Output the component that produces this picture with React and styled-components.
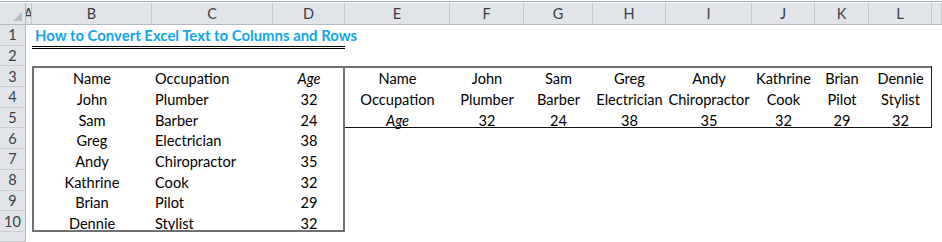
import styled, { createGlobalStyle } from "styled-components";

const GlobalStyle = createGlobalStyle`
  html, body {
    margin: 0;
    padding: 0;
    background: #ffffff;
  }
  body {
    font-family: "Lato", "Open Sans", sans-serif;
    color: #000;
  }
`;

const letters = ["A", "B", "C", "D", "E", "F", "G", "H", "I", "J", "K", "L", ""];

const people = [
  ["John", "Plumber", 32],
  ["Sam", "Barber", 24],
  ["Greg", "Electrician", 38],
  ["Andy", "Chiropractor", 35],
  ["Kathrine", "Cook", 32],
  ["Brian", "Pilot", 29],
  ["Dennie", "Stylist", 32],
];

const Sheet = styled.div`
  margin-top: 1px;
  padding-top: 1px;
  border-top: 1px solid #a3a6aa;
  width: 942px;
  height: 239px;
  display: grid;
  grid-template-columns: 26px 6px 120px 121px 72px 105px 74px 69px 73px 86px 63px 54px 63px 1fr;
  grid-template-rows: 22px repeat(10, 20.7px) 1fr;
  overflow: hidden;
  font-size: 14.6px;
`;

const Corner = styled.div`
  grid-column: 1;
  grid-row: 1;
  background: #e1e4e8;
  border-right: 1px solid #b4b9bf;
  border-bottom: 1px solid #b4b9bf;
  display: flex;
  align-items: flex-end;
  justify-content: flex-end;
  padding: 0 3px 3px 0;
`;

const ColHead = styled.div`
  grid-column: ${(p) => p.$col};
  grid-row: 1;
  background: #e1e4e8;
  border-right: 1px solid #c4c8cd;
  border-bottom: 1px solid #b4b9bf;
  color: #3a3f46;
  font-size: 14.5px;
  display: flex;
  align-items: center;
  justify-content: center;
  overflow: hidden;
  white-space: nowrap;
`;

const RowHead = styled.div`
  grid-column: 1;
  grid-row: ${(p) => p.$row};
  background: #e1e4e8;
  border-right: 1px solid #b4b9bf;
  border-bottom: 1px solid #caced3;
  color: #3a3f46;
  font-size: 14.5px;
  display: flex;
  align-items: center;
  justify-content: center;
`;

const Cell = styled.div`
  grid-column: ${(p) => p.$col};
  grid-row: ${(p) => p.$row};
  display: flex;
  align-items: flex-end;
  justify-content: ${(p) => p.$align || "center"};
  padding: 0 3px 0;
  font-style: ${(p) => (p.$italic ? "italic" : "normal")};
  white-space: nowrap;
  line-height: 1.02;
`;

const Title = styled.div`
  grid-column: 3 / 14;
  grid-row: 2;
  display: flex;
  align-items: flex-end;
  padding: 0 3px 2px;
  font-size: 14.9px;
  font-weight: 700;
  color: #10a6ea;
  white-space: nowrap;
`;

const DoubleRule = styled.div`
  grid-column: 3 / 6;
  grid-row: 3;
  border-top: 3px double #000;
`;

const Box = styled.div`
  grid-column: ${(p) => p.$cols};
  grid-row: ${(p) => p.$rows};
  border-top: 2px solid #6f6f6f;
  border-left: ${(p) => (p.$open ? "none" : "2px solid #6f6f6f")};
  border-right: ${(p) => (p.$open ? "1px solid #1a1a1a" : "2px solid #6f6f6f")};
  border-bottom: ${(p) => (p.$open ? "1px solid #111" : "2px solid #6f6f6f")};
  pointer-events: none;
`;

function CornerMark() {
  return (
    <svg width="9" height="9" viewBox="0 0 9 9">
      <polygon points="9,0 9,9 0,9" fill="#b7bcc2" />
    </svg>
  );
}

export default function App() {
  const rightRows = [
    ["Name", ...people.map((p) => p[0])],
    ["Occupation", ...people.map((p) => p[1])],
    ["Age", ...people.map((p) => p[2])],
  ];

  return (
    <>
      <GlobalStyle />
      <Sheet>
        <Corner>
          <CornerMark />
        </Corner>
        {letters.map((l, i) => (
          <ColHead key={i} $col={i + 2}>
            {l}
          </ColHead>
        ))}
        {Array.from({ length: 11 }, (_, i) => (
          <RowHead key={i} $row={i + 2}>
            {i < 10 ? i + 1 : ""}
          </RowHead>
        ))}

        <Title>How to Convert Excel Text to Columns and Rows</Title>
        <DoubleRule />

        <Cell $col={3} $row={4}>Name</Cell>
        <Cell $col={4} $row={4} $align="flex-start">Occupation</Cell>
        <Cell $col={5} $row={4} $italic>Age</Cell>
        {people.map((p, i) => [
          <Cell key={`n${i}`} $col={3} $row={i + 5}>{p[0]}</Cell>,
          <Cell key={`o${i}`} $col={4} $row={i + 5} $align="flex-start">{p[1]}</Cell>,
          <Cell key={`a${i}`} $col={5} $row={i + 5}>{p[2]}</Cell>,
        ])}

        {rightRows.map((row, r) =>
          row.map((v, c) => (
            <Cell key={`r${r}-${c}`} $col={c + 6} $row={r + 4} $italic={r === 2 && c === 0}>
              {v}
            </Cell>
          ))
        )}

        <Box $cols="3 / 6" $rows="4 / 12" />
        <Box $cols="6 / 14" $rows="4 / 7" $open />
      </Sheet>
    </>
  );
}
